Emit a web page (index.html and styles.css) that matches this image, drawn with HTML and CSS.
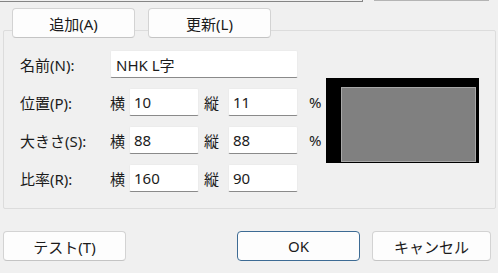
FILE: index.html
```html
<!DOCTYPE html>
<html>
<head>
    <meta charset="utf-8">
    <title>名前</title>
    <link rel="stylesheet" href="styles.css">
</head>
<body>
<div class='dialog'>
    <div class='top'>
        <div class='list'></div>
        <div class='list_btn'></div>
    </div>

    <div class='actions'>
        <button class='btn'>追加(A)</button>
        <button class='btn'>更新(L)</button>
    </div>

    <div class='group'>
        <div class='form'>
            <div class='row'>
                <span class='label'>名前(N):</span>
                <input class='edit edit_name' value='NHK L字'>
            </div>
            <div class='row'>
                <span class='label'>位置(P):</span>
                <span class='axis'>横</span><input class='edit edit_num' value='10'>
                <span class='axis axis_v'>縦</span><input class='edit edit_num' value='11'>
                <span class='pct'>%</span>
            </div>
            <div class='row'>
                <span class='label'>大きさ(S):</span>
                <span class='axis'>横</span><input class='edit edit_num' value='88'>
                <span class='axis axis_v'>縦</span><input class='edit edit_num' value='88'>
                <span class='pct'>%</span>
            </div>
            <div class='row'>
                <span class='label'>比率(R):</span>
                <span class='axis'>横</span><input class='edit edit_num' value='160'>
                <span class='axis axis_v'>縦</span><input class='edit edit_num' value='90'>
            </div>
        </div>
        <div class='preview'>
            <div class='preview_rect' style='left:10%;top:11%;width:88%;height:88%'></div>
        </div>
    </div>

    <div class='footer'>
        <button class='btn btn_test'>テスト(T)</button>
        <button class='btn btn_default'>OK</button>
        <button class='btn btn_cancel'>キャンセル</button>
    </div>
</div>
</body>
</html>
```

FILE: styles.css
```css
body
{
    margin:0;
    background-color:#f0f0f0;
    font-family:"Noto Sans", "Noto Sans CJK JP", sans-serif;
    font-size:15px;
    color:#1b1b1b;
}

.dialog
{
    width:498px;
    height:273px;
    overflow:hidden;
}

.top
{
    display:flex;
    align-items:flex-start;
    height:2px;
}

.list
{
    width:362px;
    height:1px;
    border-right:1px solid #858585;
    border-bottom:1px solid #858585;
}

.list_btn
{
    width:115px;
    margin-left:11px;
    border-bottom:1px solid #b4b4b4;
}

.btn
{
    box-sizing:border-box;
    width:123px;
    height:30px;
    padding:0;
    background-color:#fdfdfd;
    border:1px solid #d3d3d3;
    border-bottom-color:#c4c4c4;
    border-radius:4px;
    font-family:inherit;
    font-size:15px;
    color:#1b1b1b;
}

.actions
{
    display:flex;
    gap:13px;
    margin-top:6px;
    padding-left:12px;
    position:relative;
    z-index:1;
}

.group
{
    box-sizing:border-box;
    display:flex;
    width:493px;
    height:179px;
    margin:-8px 0 0 3px;
    border:1px solid #dcdcdc;
    border-radius:2px;
}

.form
{
    box-sizing:border-box;
    width:318px;
    padding:19px 0 0 16px;
    display:grid;
    grid-auto-rows:28px;
    row-gap:10px;
    align-content:start;
}

.row
{
    display:flex;
    align-items:center;
}

.label
{
    width:90px;
}

.axis
{
    width:19px;
}

.axis_v
{
    box-sizing:border-box;
    width:29px;
    padding-left:5px;
}

.pct
{
    margin-left:11px;
}

.edit
{
    box-sizing:border-box;
    height:28px;
    padding:0 0 0 4px;
    background-color:#ffffff;
    border:1px solid #ececec;
    border-bottom-color:#8a8a8a;
    border-radius:2px;
    font-family:inherit;
    font-size:15px;
    color:#1b1b1b;
    outline:none;
}

.edit_name
{
    width:188px;
    padding-left:5px;
}

.edit_num
{
    width:70px;
}

.preview
{
    position:relative;
    width:153px;
    height:85px;
    margin:47px 0 0 4px;
    background-color:#000000;
}

.preview_rect
{
    position:absolute;
    box-sizing:border-box;
    background-color:#808080;
    border:1px solid #a8a8a8;
}

.footer
{
    display:flex;
    margin:22px 0 0 3px;
}

.btn_default
{
    margin-left:111px;
    border-color:#3d6b94;
}

.btn_cancel
{
    width:119px;
    margin-left:12px;
}
```
